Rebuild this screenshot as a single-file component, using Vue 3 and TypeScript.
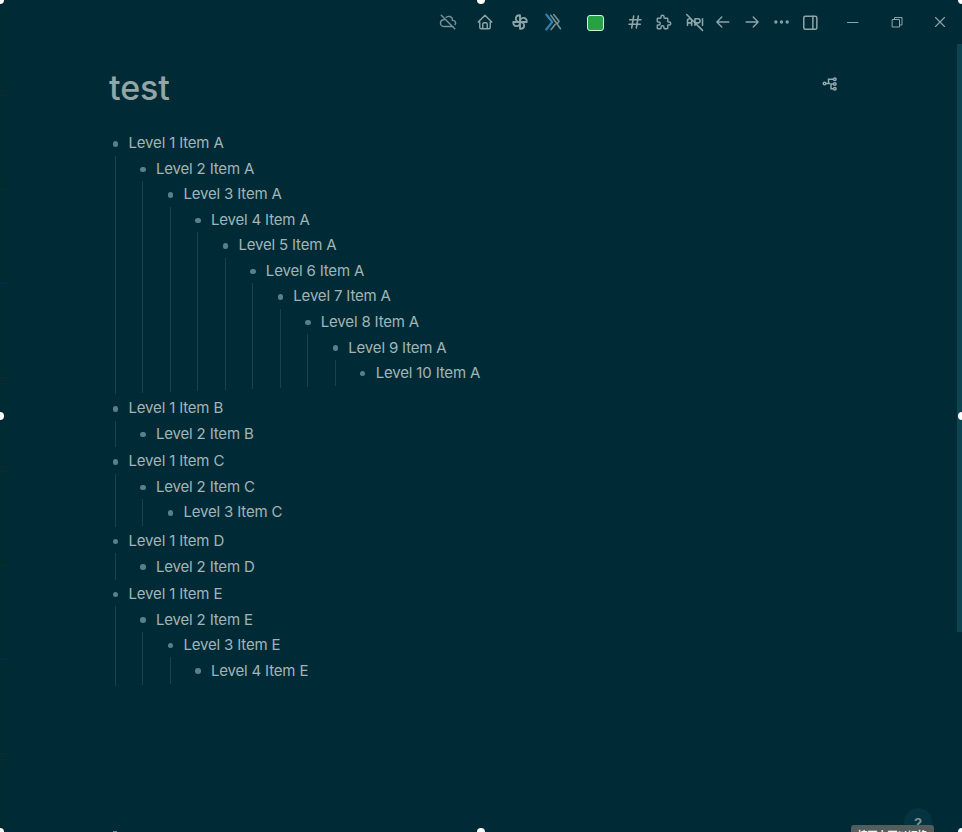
<script setup lang="ts">
import { defineComponent, h, type PropType, type VNode } from 'vue'

interface Block {
  text: string
  children?: Block[]
}

function chain(letter: string, depth: number, level = 1): Block {
  return {
    text: `Level ${level} Item ${letter}`,
    children: level < depth ? [chain(letter, depth, level + 1)] : undefined,
  }
}

const blocks: Block[] = [chain('A', 10), chain('B', 2), chain('C', 3), chain('D', 2), chain('E', 4)]

function renderBlock(block: Block): VNode {
  return h('li', { class: 'block' }, [
    h('div', { class: 'row' }, [
      h('span', { class: 'bullet-cell' }, [h('span', { class: 'bullet' })]),
      h('span', { class: 'label' }, block.text),
    ]),
    block.children ? h('ul', { class: 'children' }, block.children.map(renderBlock)) : null,
  ])
}

const Outline = defineComponent({
  props: { items: { type: Array as PropType<Block[]>, required: true } },
  setup: (props) => () => h('ul', { class: 'outline' }, props.items.map(renderBlock)),
})

const handles = ['nw', 'n', 'ne', 'w', 'e', 'sw', 's', 'se']
</script>

<template>
  <div class="window">
    <header class="bar">
      <svg class="icon cloud" viewBox="0 0 24 24"><path d="M9.58 5.55c.28-.18.6-.35.96-.49 1.18-.5 2.53-.67 3.8-.37 1.26.27 2.33.97 2.96 1.94.62.97.75 2.12.35 3.18h1a3.5 3.5 0 0 1 2.83 5.56M18.65 18H6.66C4.08 18 2 15.99 2 13.52c0-2.48 2.08-4.48 4.66-4.48.13-.58.38-1.13.73-1.63M3 3l18 18" /></svg>
      <svg class="icon home" viewBox="0 0 24 24"><path d="M5 12H3l9-9 9 9h-2M5 12v7a2 2 0 0 0 2 2h10a2 2 0 0 0 2-2v-7M9 21v-6a2 2 0 0 1 2-2h2a2 2 0 0 1 2 2v6" /></svg>
      <svg class="icon fan" viewBox="0 0 24 24"><path d="M12 12V3c-3.500 0-5.500 2-5.500 4.500S9 12 12 12H3c0 3.500 2 5.500 4.500 5.500S12 15 12 12v9c3.500 0 5.500-2 5.500-4.500S15 12 12 12h9c0-3.500-2-5.500-4.500-5.500S12 9 12 12" /></svg>
      <svg class="icon chevrons" viewBox="0 0 24 24"><path class="blue" d="M3 2l8 10-8 10" /><path d="M9 3l13 18M13 2l7 9-2 3M15 15l-5.500 7" /></svg>
      <span class="swatch"></span>
      <svg class="icon hash" viewBox="0 0 24 24"><path d="M4 8.500h17M3 15.500h17M10 3L7 21M17 3l-3 18" /></svg>
      <svg class="icon puzzle" viewBox="0 0 24 24"><path d="M4 7h3a1 1 0 0 0 1-1V5a2 2 0 0 1 4 0v1a1 1 0 0 0 1 1h3a1 1 0 0 1 1 1v3a1 1 0 0 0 1 1h1a2 2 0 0 1 0 4h-1a1 1 0 0 0-1 1v3a1 1 0 0 1-1 1h-3a1 1 0 0 1-1-1v-1a2 2 0 0 0-4 0v1a1 1 0 0 1-1 1H4a1 1 0 0 1-1-1v-3a1 1 0 0 1 1-1h1a2 2 0 0 0 0-4H4a1 1 0 0 1-1-1V8a1 1 0 0 1 1-1" /></svg>
      <svg class="icon api" viewBox="0 0 24 24"><path d="M3 13h5M12 16V8h4a2 2 0 0 1 2 2v1a2 2 0 0 1-2 2h-4M21 8v8M3 16v-5.500a2.500 2.500 0 0 1 5 0V16M2 3l19 19" /></svg>
      <svg class="icon left" viewBox="0 0 24 24"><path d="M4 12h17M11 5l-7 7 7 7" /></svg>
      <svg class="icon right" viewBox="0 0 24 24"><path d="M3 12h17M13 5l7 7-7 7" /></svg>
      <svg class="icon dots" viewBox="0 0 24 24"><circle cx="4" cy="12" r="1.400" /><circle cx="12" cy="12" r="1.400" /><circle cx="20" cy="12" r="1.400" /></svg>
      <svg class="icon sidebar" viewBox="0 0 24 24"><rect x="3.500" y="4" width="16.500" height="16.500" rx="2" /><path d="M15 4v16.500" /></svg>
      <svg class="icon min" viewBox="0 0 12 12"><path d="M.5 6.500h10.500" /></svg>
      <svg class="icon restore" viewBox="0 0 12 12"><path d="M1.500 3.500h7V11h-7zM3.500 3.500v-2H11V9H8.500" /></svg>
      <svg class="icon close" viewBox="0 0 12 12"><path d="M1.500 1.500l9 9M10.500 1.500l-9 9" /></svg>
    </header>

    <main class="page">
      <div class="heading">
        <h1>test</h1>
        <svg class="mindmap" viewBox="0 0 16 16"><circle cx="2.500" cy="7.500" r="1.300" /><circle cx="12.800" cy="3.200" r="1.300" /><circle cx="12.800" cy="8" r="1.300" /><circle cx="12.800" cy="12.800" r="1.300" /><path d="M4 7.500h2.500M11.500 3.200h-5v4.300h1.500M11.500 8H9v4.800h2.500" /></svg>
      </div>
      <Outline :items="blocks" />
    </main>

    <span class="scroll"></span>
    <div class="edge"><span v-for="n in 8" :key="n" class="tick"></span></div>
    <span class="help">?</span>
    <span class="tip">按下上下以切换</span>
    <span class="speck"></span>
    <span v-for="p in handles" :key="p" class="handle" :class="p"></span>
  </div>
</template>

<style>
body {
  margin: 0;
  background: #002b36;
}
</style>

<style scoped>
.window {
  position: relative;
  width: 962px;
  height: 832px;
  overflow: hidden;
  background: #002b36;
  color: #a1b5b8;
  font-family: Inter, "Noto Sans CJK SC", sans-serif;
}
.bar {
  display: flex;
  align-items: center;
  height: 44px;
  padding-left: 439px;
}
.icon {
  flex: none;
  width: 18px;
  height: 18px;
  fill: none;
  stroke: #8da5a9;
  stroke-width: 1.9;
  stroke-linecap: round;
  stroke-linejoin: round;
}
.cloud { stroke: #77929a; }
.home { margin-left: 19px; }
.fan { margin-left: 17px; stroke-width: 2.5; }
.chevrons { margin-left: 15px; stroke: #7b8e90; stroke-width: 2.1; }
.chevrons .blue { stroke: #2b83b6; stroke-width: 2.8; }
.swatch {
  flex: none;
  box-sizing: border-box;
  width: 17px;
  height: 16px;
  margin: 2px 0 0 25px;
  border: 1px solid #d8eee4;
  border-radius: 3px;
  background: #27a243;
}
.hash { width: 16px; margin-left: 23px; stroke-width: 2.3; }
.puzzle { margin-left: 12px; }
.api { width: 20px; height: 20px; margin-left: 12px; stroke-width: 1.9; }
.left { width: 17px; margin-left: 9px; }
.right { width: 17px; margin-left: 13px; }
.dots { width: 17px; margin-left: 12px; }
.sidebar { width: 19px; height: 19px; margin-left: 11px; }
.min { width: 12px; height: 12px; margin-left: 27px; stroke-width: 1; }
.restore { width: 12px; height: 12px; margin-left: 32px; stroke-width: 1; }
.close { width: 12px; height: 12px; margin-left: 31px; stroke-width: 1.1; }
.page {
  padding: 24px 124px 0 109px;
}
.heading {
  display: flex;
  justify-content: space-between;
  height: 62px;
}
h1 {
  margin: 0;
  color: #93a5a5;
  font-size: 34px;
  font-weight: 450;
  letter-spacing: -0.1px;
  line-height: 39px;
}
.mindmap {
  width: 16px;
  height: 16px;
  margin-top: 8px;
  fill: none;
  stroke: #93a9ac;
  stroke-width: 1.5;
}
:deep(ul) {
  margin: 0;
  padding: 0;
  list-style: none;
}
:deep(.outline > .block) {
  margin-bottom: 1.05px;
}
:deep(.row) {
  display: flex;
  align-items: center;
  height: 25.54px;
}
:deep(.bullet-cell) {
  display: flex;
  justify-content: center;
  width: 13px;
  padding-top: 2px;
}
:deep(.bullet) {
  width: 5.500px;
  height: 5.500px;
  border-radius: 50%;
  background: #56808a;
}
:deep(.label) {
  margin-left: 6.500px;
  font-size: 15px;
  letter-spacing: -0.17px;
  line-height: 25px;
  white-space: nowrap;
}
:deep(.children) {
  margin-left: 6px;
  padding: 0 0 0.980px 20.470px;
  border-left: 1px solid #17434e;
}
.scroll {
  position: absolute;
  top: 44px;
  right: 0;
  width: 5px;
  height: 588px;
  background: #0b4554;
}
.edge {
  display: flow-root;
  position: absolute;
  top: 0;
  left: 0;
  width: 8px;
  height: 826px;
  background: #002b33;
}
.tick {
  display: block;
  height: 1px;
  margin-bottom: 93px;
  background: #22251d;
}
.tick:first-child { margin-top: 94.5px; }
.help {
  position: absolute;
  left: 904px;
  top: 808px;
  width: 28px;
  height: 28px;
  border-radius: 50%;
  background: #05333f;
  color: #7c979c;
  font-size: 15px;
  font-weight: 600;
  line-height: 31px;
  text-align: center;
}
.tip {
  position: absolute;
  left: 851px;
  top: 825px;
  box-sizing: border-box;
  width: 83px;
  height: 22px;
  overflow: hidden;
  border-radius: 3px 3px 0 0;
  background: #535d5c;
  color: #f0f3f2;
  font-size: 10px;
  font-weight: 700;
  line-height: 20px;
  text-align: center;
  white-space: nowrap;
}
.speck {
  position: absolute;
  left: 113px;
  top: 831px;
  width: 4px;
  height: 1px;
  background: #668c94;
}
.handle {
  position: absolute;
  width: 8px;
  height: 8px;
  border-radius: 50%;
  background: #fff;
}
.nw, .n, .ne { top: -4px; }
.w, .e { top: 411.5px; }
.sw, .s, .se { top: 828px; }
.nw, .w, .sw { left: -4.5px; }
.n, .s { left: 476.5px; }
.ne, .e, .se { left: 958px; }
</style>
